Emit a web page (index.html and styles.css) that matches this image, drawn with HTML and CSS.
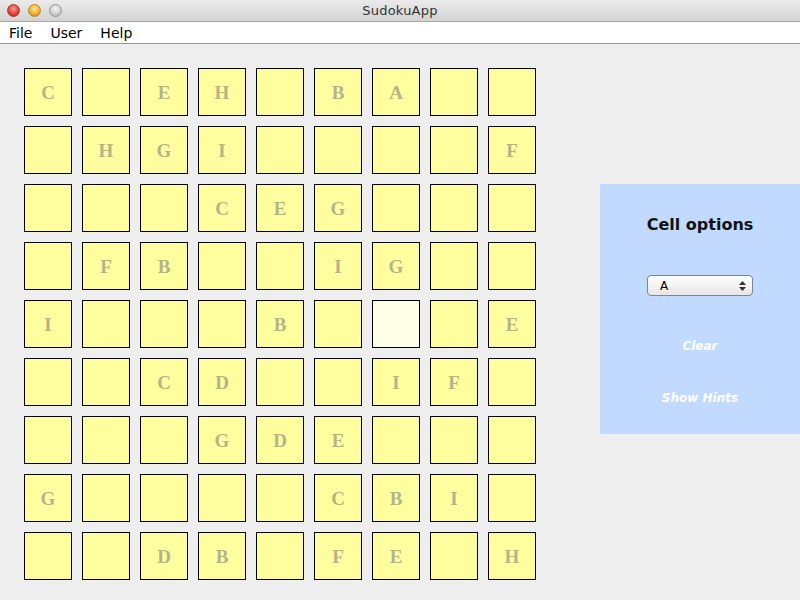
FILE: index.html
```html
<!DOCTYPE html>
<html>
<head>
<meta charset="utf-8">
<link rel="stylesheet" href="styles.css">
</head>
<body>
<div class="titlebar">
  <div class="lights">
    <span class="light red"></span>
    <span class="light yellow"></span>
    <span class="light grey"></span>
  </div>
  <div class="title">SudokuApp</div>
</div>
<div class="menubar">
  <span class="menu m-file">File</span>
  <span class="menu m-user">User</span>
  <span class="menu m-help">Help</span>
</div>
<div class="main">
  <div class="grid">
    <div class="cell">C</div><div class="cell"></div><div class="cell">E</div><div class="cell">H</div><div class="cell"></div><div class="cell">B</div><div class="cell">A</div><div class="cell"></div><div class="cell"></div>
    <div class="cell"></div><div class="cell">H</div><div class="cell">G</div><div class="cell">I</div><div class="cell"></div><div class="cell"></div><div class="cell"></div><div class="cell"></div><div class="cell">F</div>
    <div class="cell"></div><div class="cell"></div><div class="cell"></div><div class="cell">C</div><div class="cell">E</div><div class="cell">G</div><div class="cell"></div><div class="cell"></div><div class="cell"></div>
    <div class="cell"></div><div class="cell">F</div><div class="cell">B</div><div class="cell"></div><div class="cell"></div><div class="cell">I</div><div class="cell">G</div><div class="cell"></div><div class="cell"></div>
    <div class="cell">I</div><div class="cell"></div><div class="cell"></div><div class="cell"></div><div class="cell">B</div><div class="cell"></div><div class="cell selected"></div><div class="cell"></div><div class="cell">E</div>
    <div class="cell"></div><div class="cell"></div><div class="cell">C</div><div class="cell">D</div><div class="cell"></div><div class="cell"></div><div class="cell">I</div><div class="cell">F</div><div class="cell"></div>
    <div class="cell"></div><div class="cell"></div><div class="cell"></div><div class="cell">G</div><div class="cell">D</div><div class="cell">E</div><div class="cell"></div><div class="cell"></div><div class="cell"></div>
    <div class="cell">G</div><div class="cell"></div><div class="cell"></div><div class="cell"></div><div class="cell"></div><div class="cell">C</div><div class="cell">B</div><div class="cell">I</div><div class="cell"></div>
    <div class="cell"></div><div class="cell"></div><div class="cell">D</div><div class="cell">B</div><div class="cell"></div><div class="cell">F</div><div class="cell">E</div><div class="cell"></div><div class="cell">H</div>
  </div>
  <div class="panel">
    <div class="panel-title">Cell options</div>
    <div class="combo">
      <span class="combo-value">A</span>
      <svg class="arrows" width="7" height="10" viewBox="0 0 7 10"><path d="M3.5 0 L7 4 L0 4 Z M0 6 L7 6 L3.5 10 Z" fill="#333"/></svg>
    </div>
    <div class="action clear">Clear</div>
    <div class="action hints">Show Hints</div>
  </div>
</div>
</body>
</html>
```

FILE: styles.css
```css
* { box-sizing: border-box; }
html, body {
  margin: 0;
  padding: 0;
  width: 800px;
  height: 600px;
  overflow: hidden;
  background: #eeeeee;
  font-family: "DejaVu Sans", "Liberation Sans", sans-serif;
}
.titlebar {
  height: 22px;
  background: linear-gradient(#ebebeb, #d3d3d3);
  border-bottom: 1px solid #a8a8a8;
  position: relative;
  display: flex;
  align-items: center;
  justify-content: center;
}
.lights {
  position: absolute;
  left: 7px;
  top: 4px;
  display: flex;
  gap: 8px;
}
.light {
  width: 13px;
  height: 13px;
  border-radius: 50%;
  display: block;
}
.light.red {
  background: radial-gradient(circle at 50% 35%, #ff9b8f 0%, #e0443a 55%, #a8231c 100%);
  border: 1px solid #b23a30;
}
.light.yellow {
  background: radial-gradient(circle at 50% 35%, #ffe59a 0%, #f0b030 55%, #b87c14 100%);
  border: 1px solid #b8892a;
}
.light.grey {
  background: radial-gradient(circle at 50% 35%, #f5f5f5 0%, #cfcfcf 55%, #a0a0a0 100%);
  border: 1px solid #999;
}
.title {
  font-size: 13px;
  color: #333;
  letter-spacing: 0.2px;
}
.menubar {
  height: 22px;
  background: #ffffff;
  border-bottom: 1px solid #999;
  display: flex;
  align-items: center;
  font-size: 14px;
  color: #000;
  padding-left: 9px;
}
.menu { display: block; }
.m-user { margin-left: 18px; }
.m-help { margin-left: 18px; }
.main {
  display: flex;
  align-items: flex-start;
}
.grid {
  margin-left: 24px;
  margin-top: 24px;
  display: grid;
  grid-template-columns: repeat(9, 48px);
  grid-auto-rows: 48px;
  gap: 10px;
}
.cell {
  background: #ffffa0;
  border: 1px solid #000;
  display: flex;
  align-items: center;
  justify-content: center;
  font-family: "Liberation Serif", serif;
  font-weight: bold;
  font-size: 19px;
  color: #b5b387;
  padding-top: 1px;
}
.cell.selected { background: #fffee6; }
.panel {
  margin-left: 64px;
  margin-top: 140px;
  width: 200px;
  height: 250px;
  background: #c2daff;
  display: flex;
  flex-direction: column;
  align-items: center;
}
.panel-title {
  margin-top: 31px;
  font-weight: bold;
  font-size: 16px;
  color: #111;
  height: 20px;
  line-height: 20px;
}
.combo {
  margin-top: 40px;
  width: 106px;
  height: 21px;
  border: 1px solid #7a8595;
  border-radius: 4px;
  background: linear-gradient(#ffffff, #f3f3f3 50%, #e6e6e6);
  display: flex;
  align-items: center;
  justify-content: space-between;
  padding: 0 6px 0 12px;
  font-size: 12px;
  color: #000;
}
.arrows { display: block; }
.action {
  color: #ffffff;
  font-style: italic;
  font-weight: bold;
  font-size: 12px;
  height: 16px;
  line-height: 16px;
}
.clear { margin-top: 42px; }
.hints { margin-top: 36px; }
```
